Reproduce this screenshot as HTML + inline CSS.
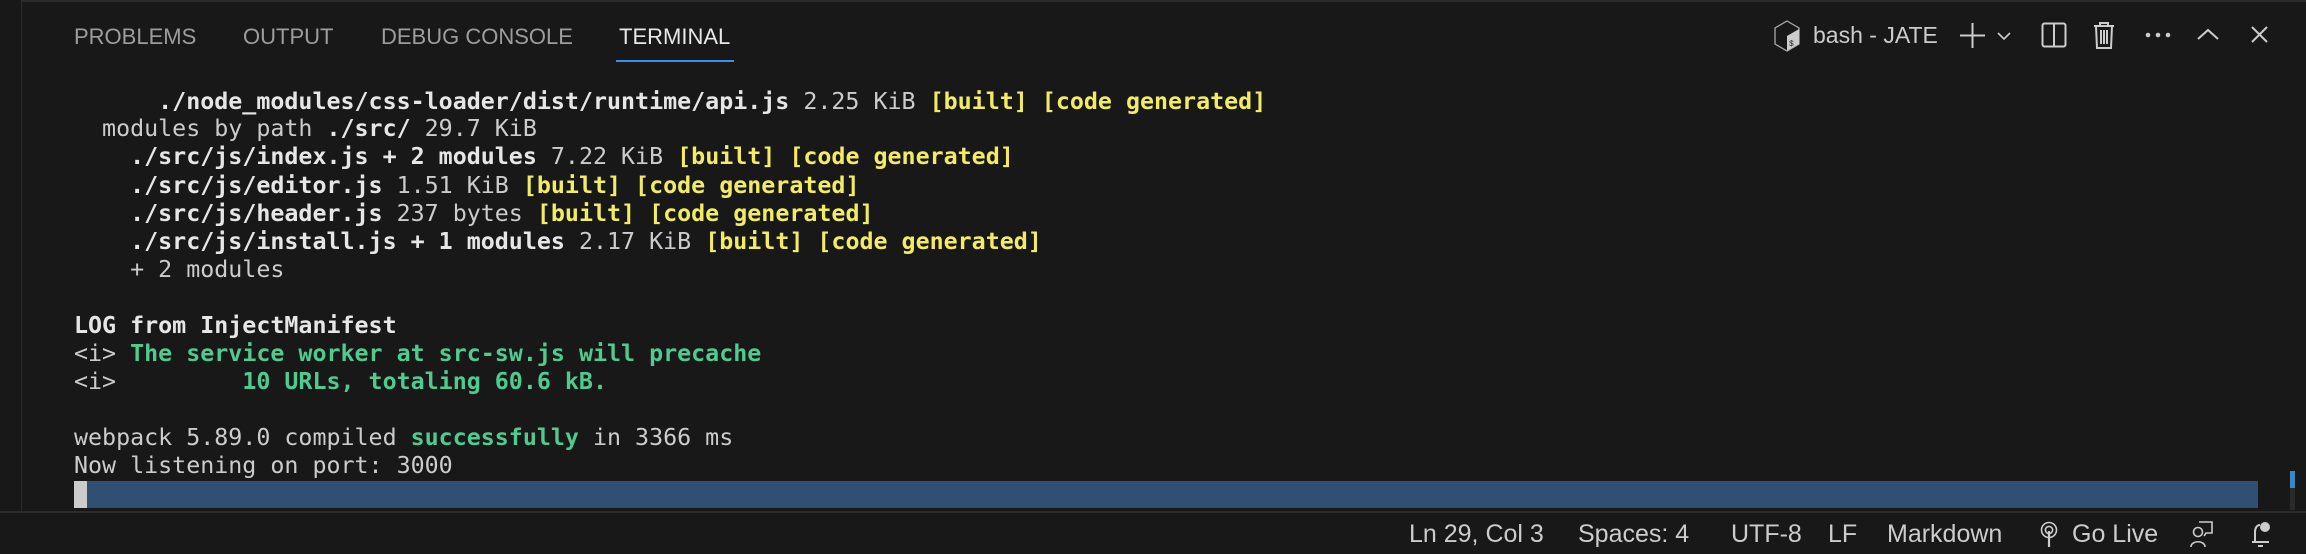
<!DOCTYPE html>
<html><head><meta charset="utf-8"><style>
html,body{margin:0;padding:0;}
body{width:2306px;height:554px;background:#181818;position:relative;overflow:hidden;font-family:"Liberation Sans",sans-serif;}
.lstrip{position:absolute;left:0;top:0;width:21px;height:512px;background:#181818;border-right:1px solid #2b2b2b;}
.topb{position:absolute;left:0;top:0;width:2306px;height:2px;background:#2b2b2b;}
.tab{position:absolute;top:23px;font-size:22px;color:#9d9d9d;line-height:28px;}
.ul{position:absolute;left:616px;top:60px;width:118px;height:2px;background:#3b8eea;}
.term{position:absolute;left:74px;top:0;font-family:"DejaVu Sans Mono",monospace;font-size:23.3px;color:#cccccc;white-space:pre;}
.ln{position:absolute;left:0;line-height:28px;}
b{font-weight:bold;color:#e6e6e6}
.y{color:#f2ec62;font-weight:bold}
.g{color:#4fcb8f;font-weight:bold}
.cur{position:absolute;left:74px;top:481px;width:13px;height:27px;background:#cccccc;}
.bar{position:absolute;left:87px;top:481px;width:2171px;height:27px;background:#2f4f73;}
.sb{position:absolute;left:0;top:511px;width:2306px;height:2px;background:#2b2b2b;}
.st{position:absolute;top:519px;font-size:25px;line-height:30px;color:#cccccc;}
.ic{position:absolute;}
</style></head><body>
<div class="topb"></div>
<div class="lstrip"></div>
<div class="tab" style="left:74px">PROBLEMS</div>
<div class="tab" style="left:243px">OUTPUT</div>
<div class="tab" style="left:381px">DEBUG CONSOLE</div>
<div class="tab" style="left:619px;color:#e7e7e7">TERMINAL</div>
<div class="ul"></div>

<svg class="ic" style="left:1774px;top:19px" width="26" height="34" viewBox="0 0 26 32"><path d="M13 1 L25 8 V24 L13 31 L1 24 V8 Z" fill="none" stroke="#aaa" stroke-width="1.3"/><path d="M13 16 L25 9 V24 L13 31 Z" fill="#ccc"/><text x="15" y="26" font-size="8" fill="#222" font-family="Liberation Mono">$</text></svg>
<div class="st" style="left:1813px;top:20px;font-size:23px">bash - JATE</div>
<svg class="ic" style="left:1959px;top:22px" width="27" height="27"><path d="M13.5 1V26M1 13.5H26" stroke="#ccc" stroke-width="2"/></svg>
<svg class="ic" style="left:1996px;top:31px" width="16" height="10"><path d="M2 2L8 8L14 2" stroke="#ccc" stroke-width="1.6" fill="none"/></svg>
<svg class="ic" style="left:2041px;top:22px" width="26" height="26"><rect x="1.5" y="1.5" width="23" height="23" rx="2" fill="none" stroke="#ccc" stroke-width="2"/><path d="M13 2V24" stroke="#ccc" stroke-width="2"/></svg>
<svg class="ic" style="left:2093px;top:21px" width="22" height="28"><path d="M1 5H21M7 5V2H15V5M3 5L4 27H18L19 5M8 9V23M11 9V23M14 9V23" stroke="#ccc" stroke-width="2" fill="none"/></svg>
<svg class="ic" style="left:2144px;top:32px" width="28" height="6"><circle cx="4" cy="3" r="2.3" fill="#ccc"/><circle cx="14" cy="3" r="2.3" fill="#ccc"/><circle cx="24" cy="3" r="2.3" fill="#ccc"/></svg>
<svg class="ic" style="left:2196px;top:27px" width="24" height="14"><path d="M2 12L12 3L22 12" stroke="#ccc" stroke-width="2" fill="none"/></svg>
<svg class="ic" style="left:2250px;top:25px" width="19" height="19"><path d="M2 2L17 17M17 2L2 17" stroke="#ccc" stroke-width="2"/></svg>

<div class="term">
<div class="ln" style="top:88px">      <b>./node_modules/css-loader/dist/runtime/api.js</b> 2.25 KiB <span class="y">[built] [code generated]</span></div>
<div class="ln" style="top:115px">  modules by path <b>./src/</b> 29.7 KiB</div>
<div class="ln" style="top:143px">    <b>./src/js/index.js + 2 modules</b> 7.22 KiB <span class="y">[built] [code generated]</span></div>
<div class="ln" style="top:172px">    <b>./src/js/editor.js</b> 1.51 KiB <span class="y">[built] [code generated]</span></div>
<div class="ln" style="top:200px">    <b>./src/js/header.js</b> 237 bytes <span class="y">[built] [code generated]</span></div>
<div class="ln" style="top:228px">    <b>./src/js/install.js + 1 modules</b> 2.17 KiB <span class="y">[built] [code generated]</span></div>
<div class="ln" style="top:256px">    + 2 modules</div>
<div class="ln" style="top:312px"><b>LOG from InjectManifest</b></div>
<div class="ln" style="top:340px">&lt;i&gt; <span class="g">The service worker at src-sw.js will precache</span></div>
<div class="ln" style="top:368px">&lt;i&gt;         <span class="g">10 URLs, totaling 60.6 kB.</span></div>
<div class="ln" style="top:424px">webpack 5.89.0 compiled <span class="g">successfully</span> in 3366 ms</div>
<div class="ln" style="top:452px">Now listening on port: 3000</div>
</div>
<div class="cur"></div>
<div class="bar"></div>
<div style="position:absolute;left:2290px;top:471px;width:5px;height:17px;background:#3a87c2"></div>
<div style="position:absolute;left:2290px;top:488px;width:5px;height:22px;background:#2a2a2a"></div>
<div class="sb"></div>

<div class="st" style="left:1409px">Ln 29, Col 3</div>
<div class="st" style="left:1578px">Spaces: 4</div>
<div class="st" style="left:1731px">UTF-8</div>
<div class="st" style="left:1828px">LF</div>
<div class="st" style="left:1887px">Markdown</div>
<svg class="ic" style="left:2040px;top:521px" width="18" height="27"><circle cx="9" cy="9" r="7.5" fill="none" stroke="#ccc" stroke-width="1.6"/><circle cx="9" cy="9" r="3.6" fill="none" stroke="#ccc" stroke-width="1.6"/><path d="M9 10V26" stroke="#ccc" stroke-width="2.2"/></svg>
<div class="st" style="left:2072px">Go Live</div>
<svg class="ic" style="left:2190px;top:520px" width="24" height="28"><circle cx="8" cy="12" r="4.5" fill="none" stroke="#ccc" stroke-width="1.6"/><path d="M1 27C1 20 15 20 15 27M9 2H22V13H16L14 16" stroke="#ccc" stroke-width="1.6" fill="none"/></svg>
<svg class="ic" style="left:2250px;top:519px" width="22" height="30"><path d="M5 23V13C5 9 7 6 10 6M2 23H19M8 27H13" stroke="#ccc" stroke-width="2" fill="none"/><circle cx="15" cy="8" r="5" fill="#ccc"/></svg>
</body></html>
